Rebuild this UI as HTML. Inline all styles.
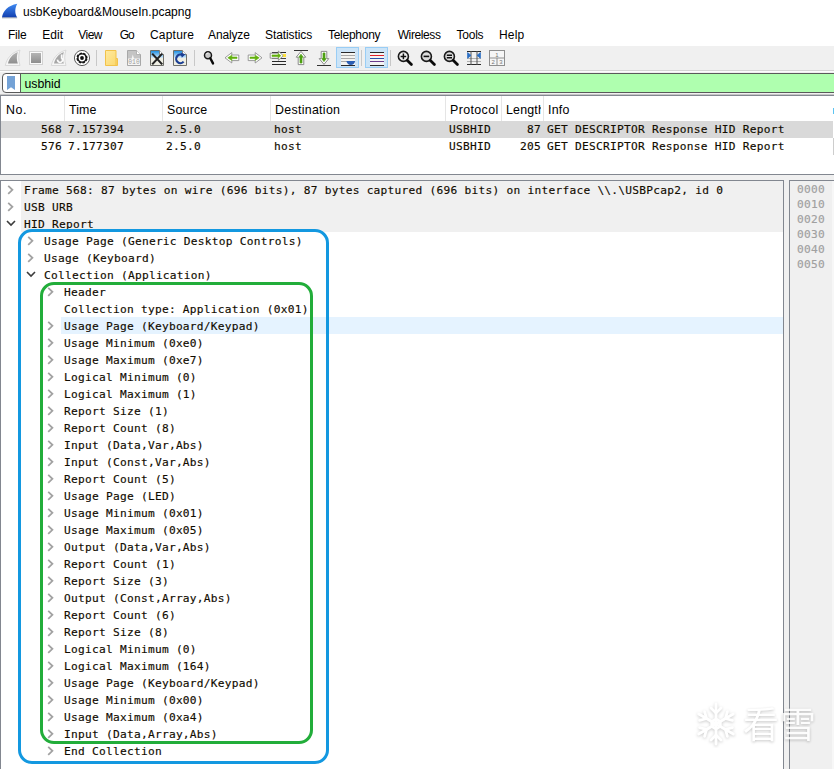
<!DOCTYPE html>
<html><head><meta charset="utf-8"><title>usbKeyboard&amp;MouseIn.pcapng</title>
<style>
html,body{margin:0;padding:0}
body{width:834px;height:769px;position:relative;overflow:hidden;background:#fff;font-family:"Liberation Sans","Noto Sans CJK SC",sans-serif;font-size:12px;color:#000}
div,span,svg{position:absolute;white-space:pre}
.mono,.tr,.hx,.pr{font-family:"DejaVu Sans Mono","Liberation Mono",monospace;font-size:11.2px;letter-spacing:0.257px;-webkit-text-stroke:0.15px currentColor;line-height:17px;height:17px;color:#120c00}
.tr{padding-top:1px}
.hx{padding-top:1px}
.hx{left:797px;color:#a0a0a0;line-height:15px;height:15px}
.mi{top:27px;line-height:16px;font-size:12px}
.hd{top:102px;line-height:16px;font-size:12.4px}
.sep{top:96px;width:1px;height:25px;background:#e5e5e5}
.tsep{top:50px;width:1px;height:16px;background:#c8c8c8}
</style></head><body>
<!-- title bar -->
<svg style="left:0px;top:0px" width="20" height="20" viewBox="0 0 20 20"><defs><linearGradient id="gt" x1="0" y1="0" x2="0" y2="1"><stop offset="0" stop-color="#3f8af2"/><stop offset="1" stop-color="#1340b0"/></linearGradient></defs><path d="M2 17.8 H17.2" stroke="#9aa0aa" stroke-width="1"/><path d="M2 17.3 C3 11 8 5.5 17.3 3.8 C14.9 8 14.5 13 17 17.3 Z" fill="url(#gt)"/></svg>
<span id="title" style="left:23px;top:4px;line-height:16px;font-size:12px;letter-spacing:0.03px">usbKeyboard&amp;MouseIn.pcapng</span>
<!-- menu -->
<span class="mi" id="m_File" style="left:8px;letter-spacing:-0.25px">File</span>
<span class="mi" id="m_Edit" style="left:42.3px;letter-spacing:0px">Edit</span>
<span class="mi" id="m_View" style="left:78.2px;letter-spacing:-0.5px">View</span>
<span class="mi" id="m_Go" style="left:119.8px;letter-spacing:-1.2px">Go</span>
<span class="mi" id="m_Capture" style="left:150px;letter-spacing:0.2px">Capture</span>
<span class="mi" id="m_Analyze" style="left:208.1px;letter-spacing:-0.15px">Analyze</span>
<span class="mi" id="m_Statistics" style="left:265.1px;letter-spacing:-0.1px">Statistics</span>
<span class="mi" id="m_Telephony" style="left:327.9px;letter-spacing:-0.25px">Telephony</span>
<span class="mi" id="m_Wireless" style="left:397.7px;letter-spacing:-0.4px">Wireless</span>
<span class="mi" id="m_Tools" style="left:456.4px;letter-spacing:-0.2px">Tools</span>
<span class="mi" id="m_Help" style="left:499px;letter-spacing:0.2px">Help</span>
<!-- toolbar -->
<div style="left:0;top:46px;width:834px;height:24px;background:#f0f0f0"></div>
<div style="left:0;top:70px;width:834px;height:1px;background:#d4d4d4"></div>
<div style="left:0;top:71px;width:834px;height:1px;background:#fdfdfd"></div>
<!-- fin start (disabled) -->
<svg style="left:4px;top:49px" width="18" height="18" viewBox="0 0 18 18"><defs><linearGradient id="gf" x1="0" y1="0" x2="0" y2="1"><stop offset="0" stop-color="#b4b4b4"/><stop offset="1" stop-color="#8e8e8e"/></linearGradient></defs><path d="M1.3 16.5 C2.6 10 7 3.6 16 1.1 C14.3 6 14.3 11 16 16.5 Z" fill="#f6f6f6" stroke="#d6d6d6" stroke-width=".9" stroke-linejoin="round"/><path d="M4 14.6 C5 9.6 8.4 5.2 13.8 3 C12.5 7 12.5 11 13.8 14.6 Z" fill="url(#gf)"/></svg>
<!-- stop -->
<svg style="left:28px;top:50px" width="16" height="16" viewBox="0 0 16 16"><rect x="1.5" y="1.5" width="13" height="13" fill="#fafafa" stroke="#d2d2d2"/><rect x="3" y="3" width="10" height="10" fill="url(#gf)"/></svg>
<!-- restart fin -->
<svg style="left:50px;top:49px" width="18" height="18" viewBox="0 0 18 18"><path d="M1.3 16.5 C2.6 10 7 3.6 16 1.1 C14.3 6 14.3 11 16 16.5 Z" fill="#f6f6f6" stroke="#d6d6d6" stroke-width=".9" stroke-linejoin="round"/><path d="M4 14.6 C5 9.6 8.4 5.2 13.8 3 C12.5 7 12.5 11 13.8 14.6 Z" fill="#a6a6a6"/><path d="M7.6 10.6 A2.5 2.5 0 1 0 11.7 9 L11.7 5.6" fill="none" stroke="#fbfbfb" stroke-width="1.8"/></svg>
<!-- gear -->
<svg style="left:73px;top:49px" width="18" height="18" viewBox="0 0 18 18"><circle cx="9" cy="9" r="7.6" fill="#fff" stroke="#4a4a4a" stroke-width=".9"/><circle cx="9" cy="9" r="4.5" fill="#fff" stroke="#111" stroke-width="2.2"/><circle cx="9" cy="9" r="5.5" fill="none" stroke="#fff" stroke-width="1.3" stroke-dasharray="1.5 2.82" stroke-dashoffset=".75"/><circle cx="9" cy="9" r="1.9" fill="#111"/></svg>
<div class="tsep" style="left:96px"></div>
<!-- open folder -->
<svg style="left:104px;top:49px" width="16" height="18" viewBox="0 0 16 18"><defs><linearGradient id="gy" x1="0" y1="0" x2="1" y2="1"><stop offset="0" stop-color="#ffeaa0"/><stop offset="1" stop-color="#fbd76a"/></linearGradient></defs><path d="M1.5 1.5 H12 V9.5 H13.5 V16.5 H1.5 Z" fill="url(#gy)" stroke="#f2c24a" stroke-width="1"/><path d="M12 9.5 V16" stroke="#f2c24a" stroke-width="1" fill="none"/></svg>
<!-- save 010 -->
<svg style="left:126px;top:49px" width="16" height="18" viewBox="0 0 16 18"><path d="M1.5 1.5 H10.5 L14.5 5.5 V16.5 H1.5 Z" fill="#c4c4c4" stroke="#a8a8a8"/><path d="M2 9.5 H5.6 L6.8 5.6 L8 9.5 H14 V16 H2 Z" fill="#f6f6f6" stroke="none"/><path d="M10.5 1.5 V5.5 H14.5" fill="#fff" stroke="#a8a8a8" stroke-width=".8"/><text x="8" y="14.9" font-family="Liberation Mono,monospace" font-size="6.3" text-anchor="middle" fill="#9c9c9c">010</text></svg>
<!-- close X -->
<svg style="left:149px;top:49px" width="16" height="18" viewBox="0 0 16 18"><defs><linearGradient id="gb" x1="0" y1="0" x2="0" y2="1"><stop offset="0" stop-color="#2090e2"/><stop offset="1" stop-color="#d8ecfa"/></linearGradient></defs><path d="M1.5 1.5 H10.5 L14.5 5.5 V16.5 H1.5 Z" fill="#efefe4" stroke="#70706a"/><path d="M2 2 H10.3 L14 5.7 V9 H2 Z" fill="url(#gb)"/><path d="M10.5 1.5 V5.5 H14.5" fill="#fff" stroke="#70706a" stroke-width=".8"/><path d="M3.2 4.6 L13.2 15.4 M13.2 4.6 L3.2 15.4" stroke="#222" stroke-width="2.1" fill="none"/></svg>
<!-- reload -->
<svg style="left:172px;top:49px" width="16" height="18" viewBox="0 0 16 18"><path d="M1.5 1.5 H10.5 L14.5 5.5 V16.5 H1.5 Z" fill="#efefe4" stroke="#70706a"/><path d="M2 2 H10.3 L14 5.7 V9 H2 Z" fill="url(#gb)"/><path d="M10.5 1.5 V5.5 H14.5" fill="#fff" stroke="#70706a" stroke-width=".8"/><path d="M11.6 12.6 A4.2 4.2 0 1 1 11 6.6" fill="none" stroke="#1c3f94" stroke-width="2.2"/><path d="M8.6 3.6 L13.4 5.2 L9.8 8.8 Z" fill="#1c3f94"/></svg>
<div class="tsep" style="left:194px"></div>
<!-- find -->
<svg style="left:202px;top:49px" width="16" height="18" viewBox="0 0 16 18"><circle cx="6" cy="6.2" r="3.5" fill="#c8c8c8" stroke="#1a1a1a" stroke-width="1.5"/><path d="M4.2 5.4 A2.2 2.2 0 0 1 6.6 4" stroke="#f2f2f2" stroke-width="1" fill="none"/><path d="M8.3 9.2 L11 14.4" stroke="#0a0a0a" stroke-width="2.4" stroke-linecap="round"/></svg>
<!-- back -->
<svg style="left:224px;top:51px" width="16" height="14" viewBox="0 0 16 14"><path d="M1 6.8 L7.8 1.6 V4 H14.8 V9.6 H7.8 V12 Z" fill="#fff" stroke="#909090" stroke-width=".9" stroke-linejoin="round"/><path d="M3.8 6.8 L7.8 4.2 V6 H13 V7.6 H7.8 V9.4 Z" fill="#62b00e" stroke="#62b00e" stroke-width=".6" stroke-linejoin="round"/></svg>
<!-- forward -->
<svg style="left:247px;top:51px" width="16" height="14" viewBox="0 0 16 14"><path d="M15 6.8 L8.2 1.6 V4 H1.2 V9.6 H8.2 V12 Z" fill="#fff" stroke="#909090" stroke-width=".9" stroke-linejoin="round"/><path d="M12.2 6.8 L8.2 4.2 V6 H3 V7.6 H8.2 V9.4 Z" fill="#62b00e" stroke="#62b00e" stroke-width=".6" stroke-linejoin="round"/></svg>
<!-- goto -->
<svg style="left:269px;top:49px" width="18" height="18" viewBox="0 0 18 18"><path d="M3 3.5 H17 M3 12.5 H17 M3 15.5 H17" stroke="#2a2a2a" stroke-width="1"/><path d="M3 9.5 H17" stroke="#444" stroke-width="1"/><rect x="13.6" y="5" width="3.4" height="3" fill="#ffe23a"/><path d="M14.2 6.7 L9.4 2 V4.2 H1.2 V9.2 H9.4 V11.4 Z" fill="#fff" stroke="#8a8a8a" stroke-width=".9" stroke-linejoin="round"/><path d="M11.8 6.7 L9.2 4.4 V5.9 H3 V7.5 H9.2 V9 Z" fill="#62b00e" stroke="#62b00e" stroke-width=".6" stroke-linejoin="round"/></svg>
<!-- first -->
<svg style="left:293px;top:49px" width="16" height="18" viewBox="0 0 16 18"><path d="M1 1.5 H15" stroke="#333" stroke-width="1"/><path d="M8 2.4 L12.8 8.2 H10.8 V15.6 H5.2 V8.2 H3.2 Z" fill="#fff" stroke="#808080" stroke-width=".9" stroke-linejoin="round"/><path d="M8 5.2 L10.2 8.2 H9 V14 H7 V8.2 H5.8 Z" fill="#4ea012" stroke="#4ea012" stroke-width=".7" stroke-linejoin="round"/></svg>
<!-- last -->
<svg style="left:316px;top:49px" width="16" height="18" viewBox="0 0 16 18"><path d="M1 16.5 H15" stroke="#333" stroke-width="1"/><path d="M8 15.4 L12.8 9.6 H10.8 V2.4 H5.2 V9.6 H3.2 Z" fill="#fff" stroke="#808080" stroke-width=".9" stroke-linejoin="round"/><path d="M8 12.6 L10.2 9.6 H9 V4 H7 V9.6 H5.8 Z" fill="#4ea012" stroke="#4ea012" stroke-width=".7" stroke-linejoin="round"/></svg>
<!-- autoscroll (checked) -->
<div style="left:336px;top:47px;width:23px;height:21px;background:#cce4f7;border:1px solid #99cdf5;box-sizing:border-box"></div>
<svg style="left:340px;top:49px" width="16" height="18" viewBox="0 0 16 18"><rect x="1" y="3" width="14" height="13" fill="#f4f4f0"/><path d="M1 3.5 H15 M1 16.5 H15" stroke="#2a2a2a" stroke-width="1"/><path d="M1 6.5 H15 M1 9.5 H15 M1 12.5 H15" stroke="#a8a8a8" stroke-width="1"/><path d="M6.4 12 H15.2 C14.6 14.4 13 16 10.8 16 C8.6 16 7 14.4 6.4 12 Z" fill="#2b5fb4"/></svg>
<div class="tsep" style="left:361px"></div>
<!-- colorize (checked) -->
<div style="left:365px;top:47px;width:23px;height:21px;background:#cce4f7;border:1px solid #99cdf5;box-sizing:border-box"></div>
<svg style="left:369px;top:49px" width="16" height="18" viewBox="0 0 16 18"><rect x="1" y="3" width="14" height="13" fill="#f4f4f4"/><path d="M1 3.5 H15 M1 16.5 H15" stroke="#2a2a2a" stroke-width="1"/><path d="M1 6.5 H15" stroke="#e0202a" stroke-width="1"/><path d="M1 9.5 H15" stroke="#2a4fa8" stroke-width="1"/><path d="M1 12.5 H15" stroke="#6a3c8c" stroke-width="1"/></svg>
<div class="tsep" style="left:390px"></div>
<!-- zoom in -->
<svg style="left:396px;top:49px" width="18" height="18" viewBox="0 0 18 18"><circle cx="7.4" cy="7.4" r="5" fill="#f0f0f0" stroke="#1a1a1a" stroke-width="1.6"/><path d="M4.6 7.4 H10.2 M7.4 4.6 V10.2" stroke="#111" stroke-width="1.5"/><path d="M11.4 11.4 L15.4 15.4" stroke="#0a0a0a" stroke-width="2.8" stroke-linecap="round"/></svg>
<!-- zoom out -->
<svg style="left:419px;top:49px" width="18" height="18" viewBox="0 0 18 18"><circle cx="7.4" cy="7.4" r="5" fill="#dcdcdc" stroke="#1a1a1a" stroke-width="1.6"/><path d="M4.6 7.4 H10.2" stroke="#111" stroke-width="1.6"/><path d="M11.4 11.4 L15.4 15.4" stroke="#0a0a0a" stroke-width="2.8" stroke-linecap="round"/></svg>
<!-- zoom reset -->
<svg style="left:442px;top:49px" width="18" height="18" viewBox="0 0 18 18"><circle cx="7.4" cy="7.4" r="5" fill="#dcdcdc" stroke="#1a1a1a" stroke-width="1.6"/><path d="M4.8 6.2 H10 M4.8 8.8 H10" stroke="#111" stroke-width="1.4"/><path d="M11.4 11.4 L15.4 15.4" stroke="#0a0a0a" stroke-width="2.8" stroke-linecap="round"/></svg>
<!-- resize columns -->
<svg style="left:466px;top:49px" width="16" height="18" viewBox="0 0 16 18"><path d="M1 2.5 H15 M1 15.5 H15" stroke="#2a2a2a" stroke-width="1"/><path d="M1 9.5 H15 M1 12.5 H15" stroke="#b0b0b0" stroke-width="1"/><path d="M5 2 V16 M11 2 V16" stroke="#555" stroke-width="1"/><path d="M1.6 3.6 L5 6.4 L1.6 9.2 Z M14.4 3.6 L11 6.4 L14.4 9.2 Z" fill="#2b6fc4" stroke="#2b6fc4" stroke-width=".8"/></svg>
<!-- layout -->
<svg style="left:488px;top:49px" width="18" height="18" viewBox="0 0 18 18"><rect x="1.5" y="1.5" width="15" height="15" fill="#f6f6f6" stroke="#8e8e8e"/><path d="M1.5 9 H16.5 M9 9 V16.5" stroke="#8e8e8e"/><text x="9" y="7.6" font-family="Liberation Sans,sans-serif" font-size="6" text-anchor="middle" fill="#777">1</text><text x="5.2" y="15" font-family="Liberation Sans,sans-serif" font-size="6" text-anchor="middle" fill="#777">2</text><text x="12.8" y="15" font-family="Liberation Sans,sans-serif" font-size="6" text-anchor="middle" fill="#777">3</text></svg>

<!-- filter bar -->
<div style="left:0;top:72px;width:834px;height:23px;background:#f0f0f0"></div>
<div style="left:2px;top:73px;width:840px;height:18px;border:1px solid #5a5a5a;border-radius:4px;background:#fff"></div>
<div style="left:21px;top:74px;width:820px;height:18px;background:#afffaf"></div>
<div style="left:20px;top:74px;width:1px;height:18px;background:#5a5a5a"></div>
<svg style="left:7px;top:76px" width="8" height="14" viewBox="0 0 8 14"><path d="M0 0 H8 V14 L4 11.3 L0 14 Z" fill="#74a2d6"/></svg>
<span id="filter" style="left:24.4px;top:76px;line-height:16px;font-size:12.3px;letter-spacing:0px">usbhid</span>
<!-- packet list -->
<div style="left:0;top:94px;width:834px;height:1px;background:#c6c6c6"></div>
<div style="left:0;top:95px;width:834px;height:80px;background:#fff;border-left:1px solid #828790;border-top:1px solid #828790;border-bottom:1px solid #828790;box-sizing:border-box"></div>
<div style="left:0;top:175px;width:834px;height:5px;background:#f0f0f0"></div>
<div class="sep" style="left:64px"></div><div class="sep" style="left:162px"></div><div class="sep" style="left:270px"></div><div class="sep" style="left:445px"></div><div class="sep" style="left:501px"></div><div class="sep" style="left:543px"></div>
<span class="hd" id="h_No" style="left:6px;letter-spacing:0.6px">No.</span>
<span class="hd" id="h_Time" style="left:69px;letter-spacing:0.1px">Time</span>
<span class="hd" id="h_Source" style="left:167px;letter-spacing:0.2px">Source</span>
<span class="hd" id="h_Destination" style="left:275px;letter-spacing:0.3px">Destination</span>
<span class="hd" id="h_Protocol" style="left:450px;letter-spacing:0.4px">Protocol</span>
<div class="hd" style="left:506px;width:35px;overflow:hidden;height:16px"><span id="h_Length" style="position:static;letter-spacing:0.2px">Length</span></div>
<span class="hd" id="h_Info" style="left:548px;letter-spacing:0.2px">Info</span>
<div style="left:1px;top:121px;width:832px;height:17px;background:#d9d9d9"></div>
<div style="left:833px;top:138px;width:1px;height:17px;background:#cdcdcd"></div>
<div style="left:833px;top:108px;width:1px;height:6px;background:#5cc4f2"></div>
<div class="pr" style="left:41px;top:121px">568</div><div class="pr" style="left:68px;top:121px">7.157394</div><div class="pr" style="left:166px;top:121px">2.5.0</div><div class="pr" style="left:274px;top:121px">host</div><div class="pr" style="left:449px;top:121px">USBHID</div><div class="pr" style="left:520px;top:121px"> 87</div><div class="pr" style="left:547px;top:121px">GET DESCRIPTOR Response HID Report</div>
<div class="pr" style="left:41px;top:138px">576</div><div class="pr" style="left:68px;top:138px">7.177307</div><div class="pr" style="left:166px;top:138px">2.5.0</div><div class="pr" style="left:274px;top:138px">host</div><div class="pr" style="left:449px;top:138px">USBHID</div><div class="pr" style="left:520px;top:138px">205</div><div class="pr" style="left:547px;top:138px">GET DESCRIPTOR Response HID Report</div>
<!-- details pane -->
<div style="left:0;top:180px;width:784px;height:600px;background:#fff;border:1px solid #828790;box-sizing:border-box"></div>
<div style="left:784px;top:175px;width:5px;height:600px;background:#f0f0f0"></div>
<div style="left:789px;top:180px;width:60px;height:600px;background:#f0f0f0;border:1px solid #828790;box-sizing:border-box"></div>
<div style="left:832px;top:181px;width:2px;height:600px;background:#f7f7f7"></div>
<div style="left:21px;top:181px;width:762px;height:51px;background:#f0f0f0"></div>
<div style="left:61px;top:317px;width:722px;height:17px;background:#e5f3ff"></div>
<svg class="ar" style="left:6px;top:185px" width="9" height="10" viewBox="0 0 9 10"><path d="M2.2 0.8 L6.4 4.8 L2.2 8.8" fill="none" stroke="#a2a2a2" stroke-width="1.8"/></svg>
<div class="tr" style="left:24px;top:181px">Frame 568: 87 bytes on wire (696 bits), 87 bytes captured (696 bits) on interface \\.\USBPcap2, id 0</div>
<svg class="ar" style="left:6px;top:202px" width="9" height="10" viewBox="0 0 9 10"><path d="M2.2 0.8 L6.4 4.8 L2.2 8.8" fill="none" stroke="#a2a2a2" stroke-width="1.8"/></svg>
<div class="tr" style="left:24px;top:198px">USB URB</div>
<svg class="ar" style="left:5.7px;top:218px" width="10" height="10" viewBox="0 0 10 10"><path d="M1 3 L5 7 L9 3" fill="none" stroke="#3c3c3c" stroke-width="1.6"/></svg>
<div class="tr" style="left:24px;top:215px">HID Report</div>
<svg class="ar" style="left:26px;top:236px" width="9" height="10" viewBox="0 0 9 10"><path d="M2.2 0.8 L6.4 4.8 L2.2 8.8" fill="none" stroke="#a2a2a2" stroke-width="1.8"/></svg>
<div class="tr" style="left:44px;top:232px">Usage Page (Generic Desktop Controls)</div>
<svg class="ar" style="left:26px;top:253px" width="9" height="10" viewBox="0 0 9 10"><path d="M2.2 0.8 L6.4 4.8 L2.2 8.8" fill="none" stroke="#a2a2a2" stroke-width="1.8"/></svg>
<div class="tr" style="left:44px;top:249px">Usage (Keyboard)</div>
<svg class="ar" style="left:25.7px;top:269px" width="10" height="10" viewBox="0 0 10 10"><path d="M1 3 L5 7 L9 3" fill="none" stroke="#3c3c3c" stroke-width="1.6"/></svg>
<div class="tr" style="left:44px;top:266px">Collection (Application)</div>
<svg class="ar" style="left:46px;top:287px" width="9" height="10" viewBox="0 0 9 10"><path d="M2.2 0.8 L6.4 4.8 L2.2 8.8" fill="none" stroke="#a2a2a2" stroke-width="1.8"/></svg>
<div class="tr" style="left:64px;top:283px">Header</div>
<div class="tr" style="left:64px;top:300px">Collection type: Application (0x01)</div>
<svg class="ar" style="left:46px;top:321px" width="9" height="10" viewBox="0 0 9 10"><path d="M2.2 0.8 L6.4 4.8 L2.2 8.8" fill="none" stroke="#a2a2a2" stroke-width="1.8"/></svg>
<div class="tr" style="left:64px;top:317px">Usage Page (Keyboard/Keypad)</div>
<svg class="ar" style="left:46px;top:338px" width="9" height="10" viewBox="0 0 9 10"><path d="M2.2 0.8 L6.4 4.8 L2.2 8.8" fill="none" stroke="#a2a2a2" stroke-width="1.8"/></svg>
<div class="tr" style="left:64px;top:334px">Usage Minimum (0xe0)</div>
<svg class="ar" style="left:46px;top:355px" width="9" height="10" viewBox="0 0 9 10"><path d="M2.2 0.8 L6.4 4.8 L2.2 8.8" fill="none" stroke="#a2a2a2" stroke-width="1.8"/></svg>
<div class="tr" style="left:64px;top:351px">Usage Maximum (0xe7)</div>
<svg class="ar" style="left:46px;top:372px" width="9" height="10" viewBox="0 0 9 10"><path d="M2.2 0.8 L6.4 4.8 L2.2 8.8" fill="none" stroke="#a2a2a2" stroke-width="1.8"/></svg>
<div class="tr" style="left:64px;top:368px">Logical Minimum (0)</div>
<svg class="ar" style="left:46px;top:389px" width="9" height="10" viewBox="0 0 9 10"><path d="M2.2 0.8 L6.4 4.8 L2.2 8.8" fill="none" stroke="#a2a2a2" stroke-width="1.8"/></svg>
<div class="tr" style="left:64px;top:385px">Logical Maximum (1)</div>
<svg class="ar" style="left:46px;top:406px" width="9" height="10" viewBox="0 0 9 10"><path d="M2.2 0.8 L6.4 4.8 L2.2 8.8" fill="none" stroke="#a2a2a2" stroke-width="1.8"/></svg>
<div class="tr" style="left:64px;top:402px">Report Size (1)</div>
<svg class="ar" style="left:46px;top:423px" width="9" height="10" viewBox="0 0 9 10"><path d="M2.2 0.8 L6.4 4.8 L2.2 8.8" fill="none" stroke="#a2a2a2" stroke-width="1.8"/></svg>
<div class="tr" style="left:64px;top:419px">Report Count (8)</div>
<svg class="ar" style="left:46px;top:440px" width="9" height="10" viewBox="0 0 9 10"><path d="M2.2 0.8 L6.4 4.8 L2.2 8.8" fill="none" stroke="#a2a2a2" stroke-width="1.8"/></svg>
<div class="tr" style="left:64px;top:436px">Input (Data,Var,Abs)</div>
<svg class="ar" style="left:46px;top:457px" width="9" height="10" viewBox="0 0 9 10"><path d="M2.2 0.8 L6.4 4.8 L2.2 8.8" fill="none" stroke="#a2a2a2" stroke-width="1.8"/></svg>
<div class="tr" style="left:64px;top:453px">Input (Const,Var,Abs)</div>
<svg class="ar" style="left:46px;top:474px" width="9" height="10" viewBox="0 0 9 10"><path d="M2.2 0.8 L6.4 4.8 L2.2 8.8" fill="none" stroke="#a2a2a2" stroke-width="1.8"/></svg>
<div class="tr" style="left:64px;top:470px">Report Count (5)</div>
<svg class="ar" style="left:46px;top:491px" width="9" height="10" viewBox="0 0 9 10"><path d="M2.2 0.8 L6.4 4.8 L2.2 8.8" fill="none" stroke="#a2a2a2" stroke-width="1.8"/></svg>
<div class="tr" style="left:64px;top:487px">Usage Page (LED)</div>
<svg class="ar" style="left:46px;top:508px" width="9" height="10" viewBox="0 0 9 10"><path d="M2.2 0.8 L6.4 4.8 L2.2 8.8" fill="none" stroke="#a2a2a2" stroke-width="1.8"/></svg>
<div class="tr" style="left:64px;top:504px">Usage Minimum (0x01)</div>
<svg class="ar" style="left:46px;top:525px" width="9" height="10" viewBox="0 0 9 10"><path d="M2.2 0.8 L6.4 4.8 L2.2 8.8" fill="none" stroke="#a2a2a2" stroke-width="1.8"/></svg>
<div class="tr" style="left:64px;top:521px">Usage Maximum (0x05)</div>
<svg class="ar" style="left:46px;top:542px" width="9" height="10" viewBox="0 0 9 10"><path d="M2.2 0.8 L6.4 4.8 L2.2 8.8" fill="none" stroke="#a2a2a2" stroke-width="1.8"/></svg>
<div class="tr" style="left:64px;top:538px">Output (Data,Var,Abs)</div>
<svg class="ar" style="left:46px;top:559px" width="9" height="10" viewBox="0 0 9 10"><path d="M2.2 0.8 L6.4 4.8 L2.2 8.8" fill="none" stroke="#a2a2a2" stroke-width="1.8"/></svg>
<div class="tr" style="left:64px;top:555px">Report Count (1)</div>
<svg class="ar" style="left:46px;top:576px" width="9" height="10" viewBox="0 0 9 10"><path d="M2.2 0.8 L6.4 4.8 L2.2 8.8" fill="none" stroke="#a2a2a2" stroke-width="1.8"/></svg>
<div class="tr" style="left:64px;top:572px">Report Size (3)</div>
<svg class="ar" style="left:46px;top:593px" width="9" height="10" viewBox="0 0 9 10"><path d="M2.2 0.8 L6.4 4.8 L2.2 8.8" fill="none" stroke="#a2a2a2" stroke-width="1.8"/></svg>
<div class="tr" style="left:64px;top:589px">Output (Const,Array,Abs)</div>
<svg class="ar" style="left:46px;top:610px" width="9" height="10" viewBox="0 0 9 10"><path d="M2.2 0.8 L6.4 4.8 L2.2 8.8" fill="none" stroke="#a2a2a2" stroke-width="1.8"/></svg>
<div class="tr" style="left:64px;top:606px">Report Count (6)</div>
<svg class="ar" style="left:46px;top:627px" width="9" height="10" viewBox="0 0 9 10"><path d="M2.2 0.8 L6.4 4.8 L2.2 8.8" fill="none" stroke="#a2a2a2" stroke-width="1.8"/></svg>
<div class="tr" style="left:64px;top:623px">Report Size (8)</div>
<svg class="ar" style="left:46px;top:644px" width="9" height="10" viewBox="0 0 9 10"><path d="M2.2 0.8 L6.4 4.8 L2.2 8.8" fill="none" stroke="#a2a2a2" stroke-width="1.8"/></svg>
<div class="tr" style="left:64px;top:640px">Logical Minimum (0)</div>
<svg class="ar" style="left:46px;top:661px" width="9" height="10" viewBox="0 0 9 10"><path d="M2.2 0.8 L6.4 4.8 L2.2 8.8" fill="none" stroke="#a2a2a2" stroke-width="1.8"/></svg>
<div class="tr" style="left:64px;top:657px">Logical Maximum (164)</div>
<svg class="ar" style="left:46px;top:678px" width="9" height="10" viewBox="0 0 9 10"><path d="M2.2 0.8 L6.4 4.8 L2.2 8.8" fill="none" stroke="#a2a2a2" stroke-width="1.8"/></svg>
<div class="tr" style="left:64px;top:674px">Usage Page (Keyboard/Keypad)</div>
<svg class="ar" style="left:46px;top:695px" width="9" height="10" viewBox="0 0 9 10"><path d="M2.2 0.8 L6.4 4.8 L2.2 8.8" fill="none" stroke="#a2a2a2" stroke-width="1.8"/></svg>
<div class="tr" style="left:64px;top:691px">Usage Minimum (0x00)</div>
<svg class="ar" style="left:46px;top:712px" width="9" height="10" viewBox="0 0 9 10"><path d="M2.2 0.8 L6.4 4.8 L2.2 8.8" fill="none" stroke="#a2a2a2" stroke-width="1.8"/></svg>
<div class="tr" style="left:64px;top:708px">Usage Maximum (0xa4)</div>
<svg class="ar" style="left:46px;top:729px" width="9" height="10" viewBox="0 0 9 10"><path d="M2.2 0.8 L6.4 4.8 L2.2 8.8" fill="none" stroke="#a2a2a2" stroke-width="1.8"/></svg>
<div class="tr" style="left:64px;top:725px">Input (Data,Array,Abs)</div>
<svg class="ar" style="left:46px;top:746px" width="9" height="10" viewBox="0 0 9 10"><path d="M2.2 0.8 L6.4 4.8 L2.2 8.8" fill="none" stroke="#a2a2a2" stroke-width="1.8"/></svg>
<div class="tr" style="left:64px;top:742px">End Collection</div>
<div class="hx" style="top:181px">0000</div><div class="hx" style="top:196px">0010</div><div class="hx" style="top:211px">0020</div><div class="hx" style="top:226px">0030</div><div class="hx" style="top:241px">0040</div><div class="hx" style="top:256px">0050</div>
<!-- annotation boxes -->
<div style="left:18px;top:229px;width:311px;height:535px;border:3px solid #1398e0;border-radius:14px;box-sizing:border-box"></div>
<div style="left:40px;top:282px;width:273px;height:462px;border:3px solid #22ad3a;border-radius:14px;box-sizing:border-box"></div>
<!-- watermark -->
<svg style="left:694px;top:700px" width="44" height="48" viewBox="-22 -24 44 48"><g stroke="#fff" stroke-width="2.8" stroke-linecap="round" fill="none" style="filter:drop-shadow(0 1px 1.5px rgba(0,0,0,.2))"><path d="M0 -20V20M-17.3 -10L17.3 10M-17.3 10L17.3 -10"/><path d="M-5 -16L0 -11L5 -16M-5 16L0 11L5 16M-16.4 -3.7L-9.5 -5.5L-11.4 -12.3M16.4 3.7L9.5 5.5L11.4 12.3M-16.4 3.7L-9.5 5.5L-11.4 12.3M16.4 -3.7L9.5 -5.5L11.4 -12.3"/><path d="M0 -5L4.3 -2.5V2.5L0 5L-4.3 2.5V-2.5Z"/></g></svg>
<span style="left:743px;top:706px;font-size:36px;line-height:40px;color:#fff;opacity:.8;font-family:'Liberation Sans','Noto Sans CJK SC',sans-serif;text-shadow:0 1px 3px rgba(0,0,0,.3);letter-spacing:1px">看雪</span>
</body></html>
